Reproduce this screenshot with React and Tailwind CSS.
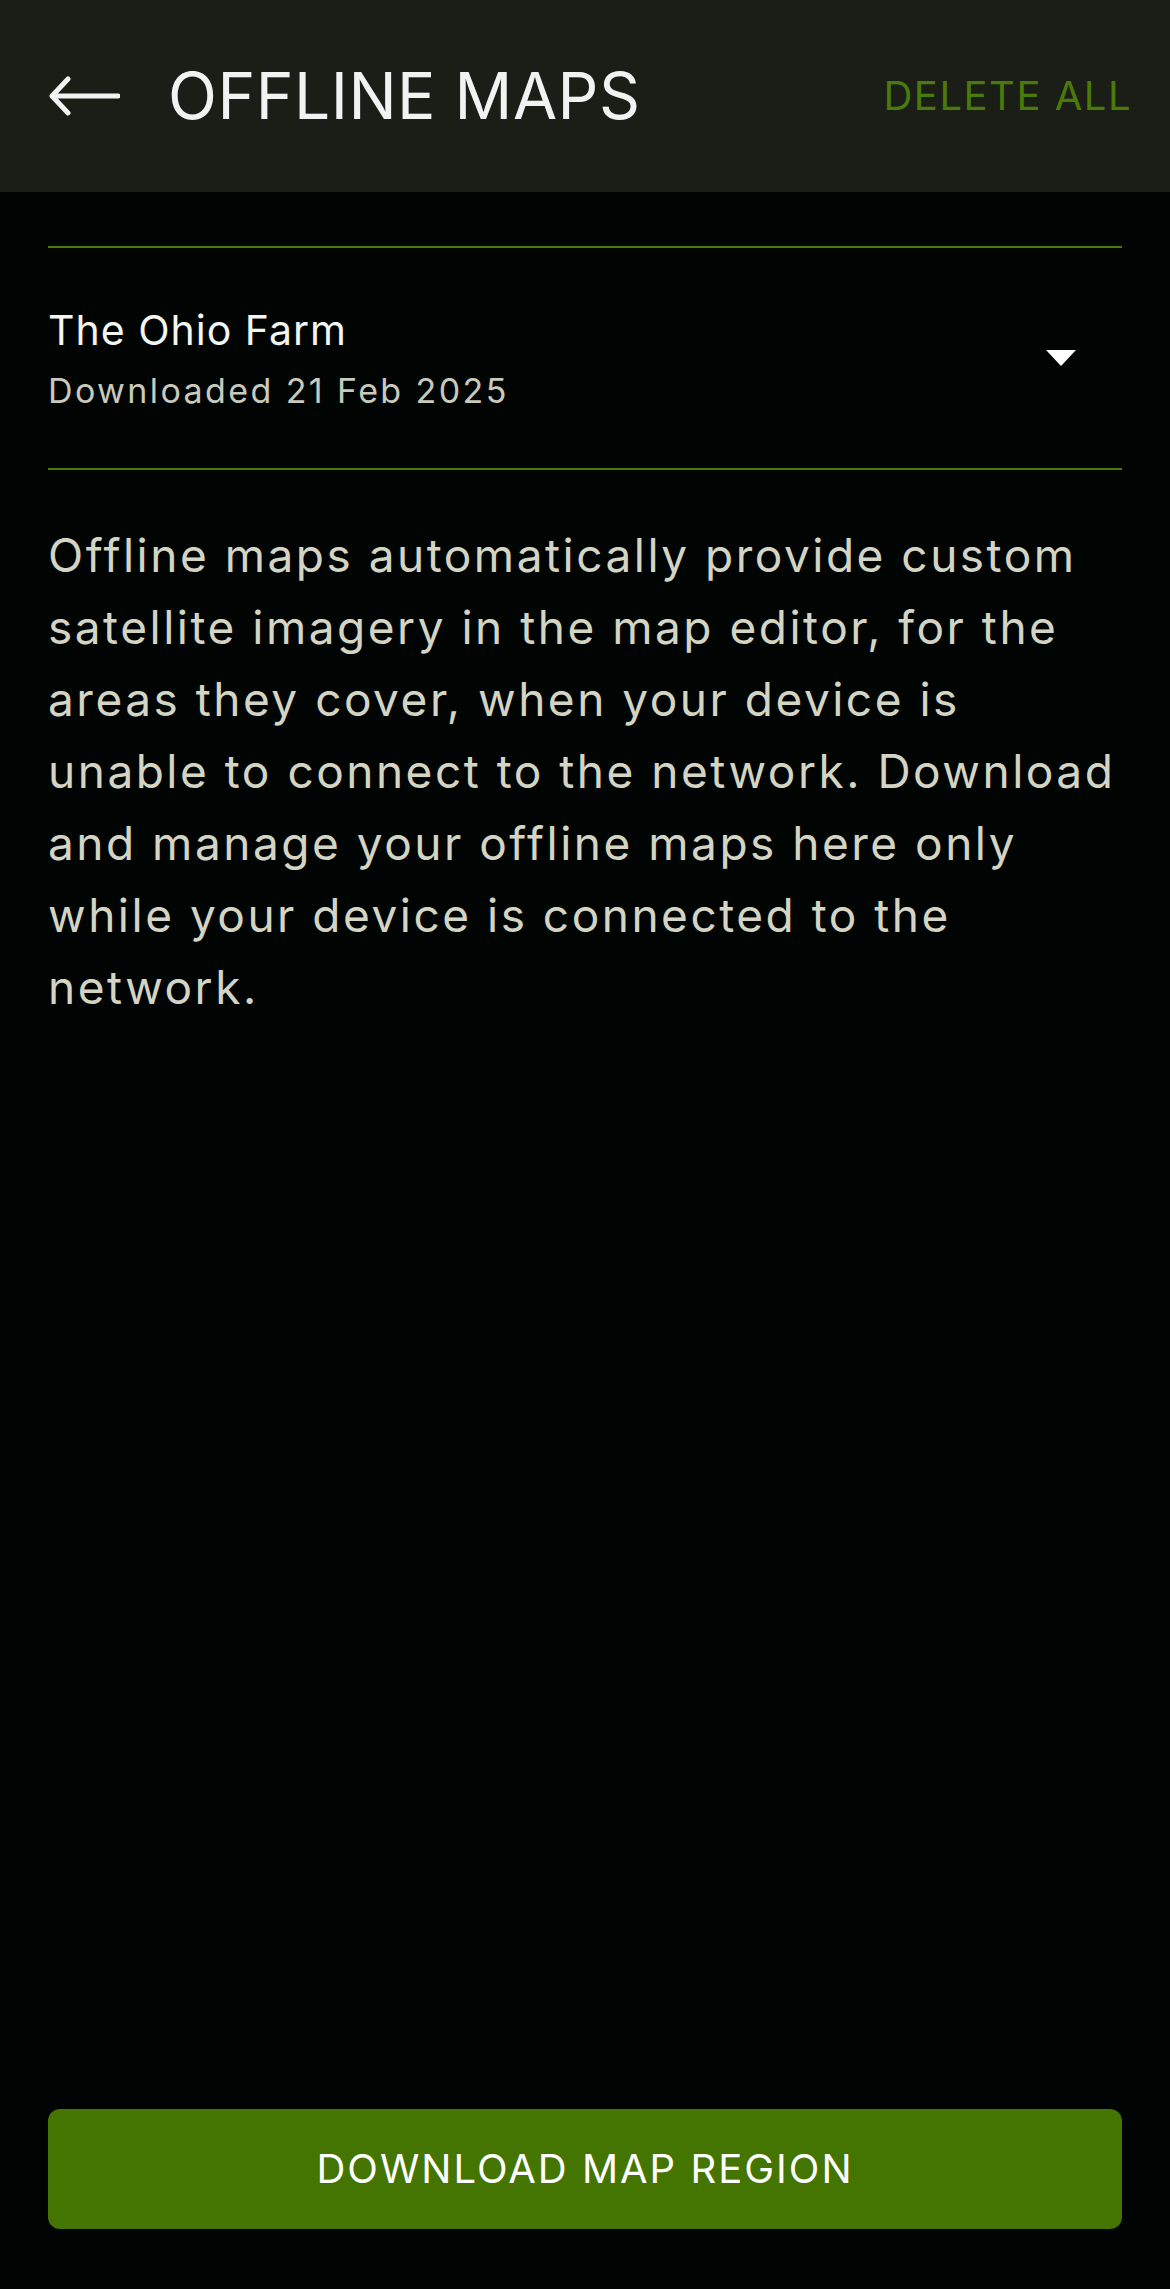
export default function App() {
  return (
    <div
      className="flex h-[2289px] w-full flex-col bg-[#000503]"
      style={{ fontFamily: "Inter, 'Noto Sans', sans-serif" }}
    >
      <header className="flex h-[192px] shrink-0 items-center bg-[#1b1e16] pl-[48px] pr-[38px]">
        <button className="mr-[48px] flex items-center text-[#f2f2f2]">
          <svg width="72" height="40" viewBox="0 0 72 40" fill="none">
            <path
              d="M70 20H4M20 3L4 20L20 37"
              stroke="currentColor"
              strokeWidth="5"
              strokeLinecap="round"
              strokeLinejoin="round"
            />
          </svg>
        </button>
        <h1 className="text-[64px] font-normal tracking-[0.5px] text-[#f2f2f2]">
          OFFLINE MAPS
        </h1>
        <button className="ml-auto text-[40px] tracking-[1.5px] text-[#4a7a0a]">
          DELETE ALL
        </button>
      </header>

      <main className="flex flex-1 flex-col px-[48px]">
        <div className="mt-[54px] border-y-2 border-[#4a7a0a]">
          <div className="flex h-[220px] items-center justify-between">
            <div className="flex flex-col">
              <span className="text-[41px] tracking-[1px] text-[#f4f4f0]">
                The Ohio Farm
              </span>
              <span className="mt-[4px] text-[34px] tracking-[2.4px] text-[#c9c9bc]">
                Downloaded 21 Feb 2025
              </span>
            </div>
            <svg width="30" height="16" viewBox="0 0 30 16" className="mr-[46px]">
              <path d="M0 0H30L15 16Z" fill="#ffffff" />
            </svg>
          </div>
        </div>

        <p className="mt-[49px] text-[46px] leading-[72px] tracking-[2.5px] text-[#d4d4c4]">
          Offline maps automatically provide custom satellite imagery in the map
          editor, for the areas they cover, when your device is unable to
          connect to the network. Download and manage your offline maps here
          only while your device is connected to the network.
        </p>

        <button className="mb-[60px] mt-auto flex h-[120px] w-full items-center justify-center rounded-[12px] bg-[#447500] text-[40px] tracking-[2px] text-white">
          DOWNLOAD MAP REGION
        </button>
      </main>
    </div>
  );
}
